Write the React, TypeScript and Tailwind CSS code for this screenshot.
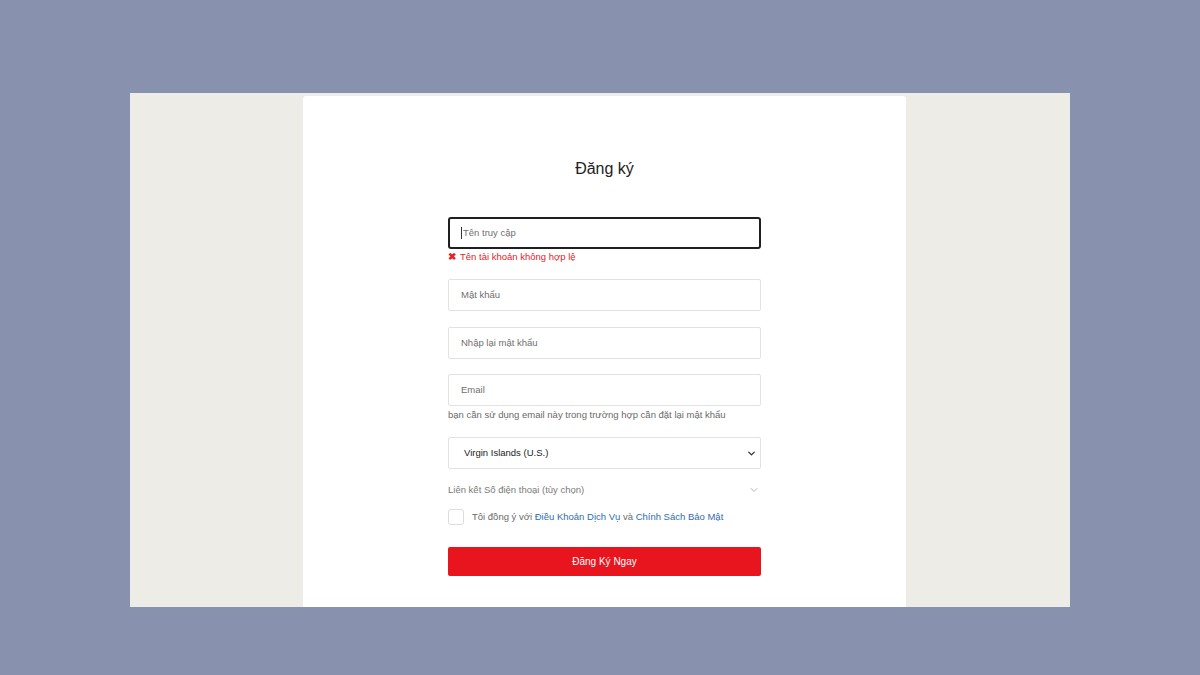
import { ChevronDown } from 'lucide-react';

// A simple text field drawn as a box with placeholder text
function Field({ placeholder, active }: { placeholder: string; active?: boolean }) {
  return (
    <div
      className={
        active
          ? 'h-[32px] rounded-[3px] border-2 border-[#1f1f1f] flex items-center pl-[11px]'
          : 'h-[32px] rounded-[2px] border border-[#e2e2e2] flex items-center pl-[12px]'
      }
    >
      {active && <span className="w-px h-[12px] bg-[#333] mr-px" />}
      <span className="text-[9.5px] text-[#6f6f6f]">{placeholder}</span>
    </div>
  );
}

export default function App() {
  return (
    <div className="w-[1200px] h-[675px] bg-[#8891ae] pt-[93px] pl-[130px] font-['Liberation_Sans',Arial,sans-serif]">
      <div className="w-[940px] h-[514px] bg-[#edece7] pl-[173px] pt-[3px]">
        <div className="w-[603px] h-[511px] bg-white rounded-t-[3px] pl-[145px] pt-[63px]">
          <div className="w-[313px]">
            {/* Header */}
            <h1 className="h-[20px] leading-[20px] text-center text-[16px] text-[#222]">Đăng ký</h1>

            {/* Username with validation error */}
            <div className="mt-[38px]">
              <Field placeholder="Tên truy cập" active />
            </div>
            <div className="h-[14px] leading-[14px] mt-px flex items-center gap-[4px] text-[9.5px] text-[#e3222b]">
              <span className="text-[9.5px] font-bold">✖</span>
              <span>Tên tài khoản không hợp lệ</span>
            </div>

            <div className="mt-[15px]">
              <Field placeholder="Mật khẩu" />
            </div>
            <div className="mt-[16px]">
              <Field placeholder="Nhập lại mật khẩu" />
            </div>
            <div className="mt-[15px]">
              <Field placeholder="Email" />
            </div>
            <p className="h-[14px] leading-[14px] mt-[2px] text-[9.5px] text-[#6a6a6a]">
              bạn cần sử dụng email này trong trường hợp cần đặt lại mật khẩu
            </p>

            {/* Country select */}
            <div className="mt-[15px] h-[32px] rounded-[2px] border border-[#e2e2e2] flex items-center justify-between pl-[15px] pr-[3px]">
              <span className="text-[9.5px] text-[#222]">Virgin Islands (U.S.)</span>
              <ChevronDown size={11} strokeWidth={3} className="text-[#333]" />
            </div>

            {/* Optional phone link */}
            <div className="mt-[14px] h-[14px] flex items-center justify-between pr-[1px]">
              <span className="text-[9.5px] text-[#7a7a7a]">Liên kết Số điện thoại (tùy chọn)</span>
              <ChevronDown size={12} strokeWidth={2} className="text-[#b8b8b8]" />
            </div>

            {/* Terms */}
            <div className="mt-[12px] flex items-center">
              <div className="w-[16px] h-[16px] rounded-[3px] border border-[#dcdcdc]" />
              <span className="ml-[8px] text-[9.5px] text-[#6a6a6a]">
                Tôi đồng ý với <span className="text-[#2f6cb5]">Điều Khoản Dịch Vụ</span> và{' '}
                <span className="text-[#2f6cb5]">Chính Sách Bảo Mật</span>
              </span>
            </div>

            <button className="mt-[22px] w-full h-[29px] rounded-[2px] bg-[#e8141e] text-white text-[10px]">
              Đăng Ký Ngay
            </button>
          </div>
        </div>
      </div>
    </div>
  );
}
